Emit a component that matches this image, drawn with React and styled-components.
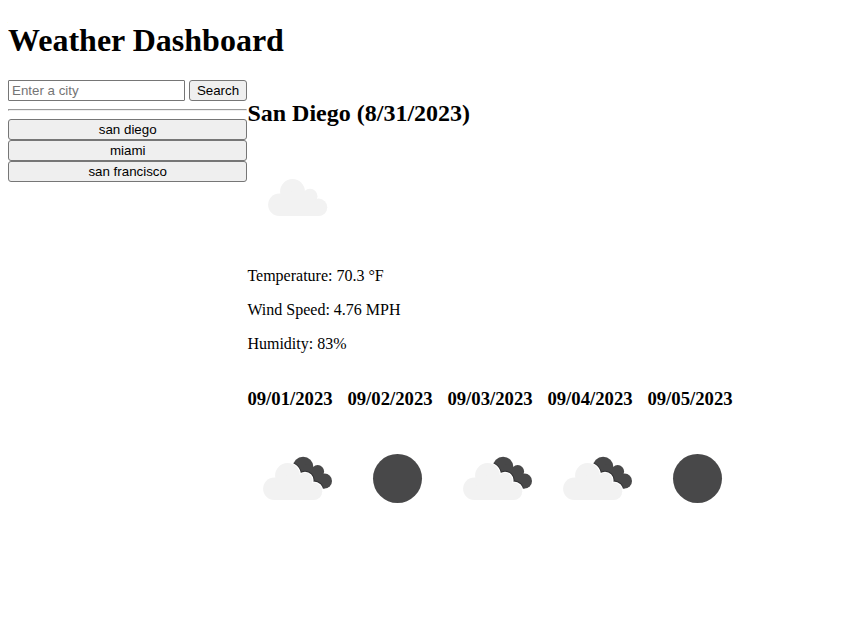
import React, { useId } from "react";
import styled, { createGlobalStyle } from "styled-components";

const GlobalStyle = createGlobalStyle`
  body { margin: 8px; background: #fff; color: #000; font-family: "Liberation Serif", "Times New Roman", serif; font-size: 16px; }
`;
const Title = styled.h1`
  margin: 14px 0 21px;
  font-size: 32px;
  line-height: 37px;
`;
const Layout = styled.main`
  display: flex;
  align-items: flex-start;
`;
const Sidebar = styled.aside`
  width: 239.4px;
  flex: none;
`;
const SearchForm = styled.div`
  display: flex;
  gap: 4px;
`;
const CityInput = styled.input`
  box-sizing: border-box;
  width: 177px;
  height: 21px;
  margin: 0;
  padding: 1px 3px;
  border: 1px solid #767676;
  border-radius: 1px;
  font: 13.333px "Liberation Sans", Arial, sans-serif;
  &::placeholder { color: #757575; }
`;
const Button = styled.button`
  box-sizing: border-box;
  height: 21px;
  width: ${(p) => (p.$wide ? "100%" : "58px")};
  padding: 0;
  border: 1px solid #767676;
  border-radius: 3px;
  background: #efefef;
  color: #000;
  font: 13.333px "Liberation Sans", Arial, sans-serif;
`;
const Divider = styled.hr`
  margin: 8px 0;
`;
const History = styled.div`
  display: flex;
  flex-direction: column;
`;
const Weather = styled.section`
  flex: 1;
`;
const City = styled.h2`
  margin: 20px 0;
  font-size: 24px;
  line-height: 27px;
`;
const Reading = styled.p`
  margin: 0 0 16px;
  line-height: 18px;
`;
const Icon = styled.svg`
  display: block;
  width: 100px;
  height: 100px;
`;
const CurrentIcon = styled(Icon)`
  margin-bottom: 20px;
`;
const Forecast = styled.div`
  display: flex;
  margin-top: 35px;
`;
const Day = styled.article`
  width: 100px;
`;
const DateLabel = styled.h3`
  margin: 0 0 20px;
  font-size: 18.72px;
  line-height: 21px;
`;

const Cloud = () => (
  <>
    <circle cx="32.4" cy="57.7" r="11.3" />
    <circle cx="45.5" cy="44.4" r="12.4" />
    <circle cx="63" cy="49.3" r="7.5" />
    <circle cx="71.6" cy="60.3" r="8.7" />
    <path d="M32.4 69V56L45.4 44L62.4 48L71.6 60V69Z" />
  </>
);

const DarkCloud = () => (
  <>
    <circle cx="56.1" cy="38" r="10.3" />
    <circle cx="70.7" cy="42.5" r="6.4" />
    <circle cx="77.6" cy="52" r="7.4" />
    <path d="M50 44L60 35L70 40L80 50L77.6 59.4L64 58Z" />
  </>
);

function BrokenClouds() {
  const id = useId();
  return (
    <>
      <clipPath id={id}><DarkCloud /></clipPath>
      <g fill="#484849"><DarkCloud /></g>
      <g clipPath={`url(#${id})`}>
        <g transform="translate(-5 2)" stroke="#303032" strokeWidth="4"><Cloud /></g>
      </g>
      <g transform="translate(-5 2)">
        <g fill="#fff" stroke="#fff" strokeWidth="2.2"><Cloud /></g>
        <g fill="#f2f2f2"><Cloud /></g>
      </g>
    </>
  );
}

const icons = {
  scattered: () => <g fill="#f2f2f2"><Cloud /></g>,
  broken: () => <BrokenClouds />,
  clear: () => <circle cx="50.5" cy="49.5" r="24.5" fill="#484849" />,
};

const days = [
  ["09/01/2023", "broken"],
  ["09/02/2023", "clear"],
  ["09/03/2023", "broken"],
  ["09/04/2023", "broken"],
  ["09/05/2023", "clear"],
];

export default function App() {
  return (
    <>
      <GlobalStyle />
      <Title>Weather Dashboard</Title>
      <Layout>
        <Sidebar>
          <SearchForm>
            <CityInput placeholder="Enter a city" />
            <Button>Search</Button>
          </SearchForm>
          <Divider />
          <History>
            {["san diego", "miami", "san francisco"].map((c) => <Button $wide key={c}>{c}</Button>)}
          </History>
        </Sidebar>
        <Weather>
          <City>San Diego (8/31/2023)</City>
          <CurrentIcon viewBox="0 0 100 100">{icons.scattered()}</CurrentIcon>
          <Reading>Temperature: 70.3 °F</Reading>
          <Reading>Wind Speed: 4.76 MPH</Reading>
          <Reading>Humidity: 83%</Reading>
          <Forecast>
            {days.map(([date, kind]) => (
              <Day key={date}>
                <DateLabel>{date}</DateLabel>
                <Icon viewBox="0 0 100 100">{icons[kind]()}</Icon>
              </Day>
            ))}
          </Forecast>
        </Weather>
      </Layout>
    </>
  );
}
